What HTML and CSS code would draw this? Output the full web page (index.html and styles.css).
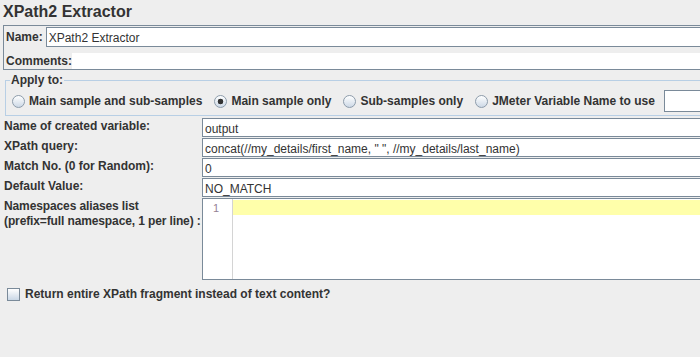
FILE: index.html
```html
<!DOCTYPE html>
<html lang="en">
<head>
  <meta charset="UTF-8" />
  <meta name="viewport" content="width=device-width, initial-scale=1.0" />
  <title>XPath2 Extractor</title>
  <link rel="stylesheet" href="styles.css">
</head>
<body>
  <div class="page">
    <!-- ===== TITLE ===== -->
    <h1 class="title">XPath2 Extractor</h1>

    <!-- ===== NAME / COMMENTS ===== -->
    <div class="name-panel">
      <div class="name-row">
        <span class="name-label">Name:</span>
        <div class="field name-field">XPath2 Extractor</div>
      </div>
      <div class="name-row comments-row">
        <span class="name-label">Comments:</span>
        <div class="plain-field"></div>
      </div>
    </div>

    <!-- ===== APPLY TO ===== -->
    <fieldset class="apply">
      <legend>Apply to:</legend>
      <div class="radios">
        <span class="opt"><span class="radio"></span>Main sample and sub-samples</span>
        <span class="opt"><span class="radio on"></span>Main sample only</span>
        <span class="opt"><span class="radio"></span>Sub-samples only</span>
        <span class="opt last"><span class="radio"></span>JMeter Variable Name to use</span>
        <div class="var-box"></div>
      </div>
    </fieldset>

    <!-- ===== FIELDS ===== -->
    <div class="form">
      <div class="lbl">Name of created variable:</div>
      <div class="field">output</div>

      <div class="lbl">XPath query:</div>
      <div class="field">concat(//my_details/first_name, " ", //my_details/last_name)</div>

      <div class="lbl">Match No. (0 for Random):</div>
      <div class="field">0</div>

      <div class="lbl">Default Value:</div>
      <div class="field">NO_MATCH</div>

      <div class="lbl lbl-two">Namespaces aliases list<br>(prefix=full namespace, 1 per line) :</div>
      <div class="editor">
        <div class="gutter"><span>1</span></div>
        <div class="editor-body"><div class="current-line"></div></div>
      </div>
    </div>

    <!-- ===== CHECKBOX ===== -->
    <div class="check-row">
      <span class="checkbox"></span>
      <span>Return entire XPath fragment instead of text content?</span>
    </div>
  </div>
</body>
</html>
```

FILE: styles.css
```css
:root {
  --bg: #eeeeee;
  --fg: #333333;
  --edge: #7a8a99;
  --group: #b8cfe5;
}
* { box-sizing: border-box; margin: 0; padding: 0; }

body {
  font-family: "Liberation Sans", Arial, sans-serif;
  font-size: 12px;
  line-height: 14px;
  background: var(--bg);
  color: var(--fg);
  overflow: hidden;
}

.page { width: 730px; }

/* ===== TITLE ===== */
.title {
  font-size: 16px;
  line-height: 18px;
  font-weight: 700;
  margin: 3px 0 4px 3px;
}

/* ===== NAME / COMMENTS ===== */
.name-panel {
  margin-left: 3px;
  border: 1px solid var(--edge);
  padding-top: 1px;
}
.name-row { display: flex; align-items: center; }
.name-label { font-weight: 700; padding: 0 3px 0 2px; }
.name-field { flex: 1; height: 20px; padding-top: 3px; }
.comments-row { margin-top: 6px; }
.comments-row .name-label { padding-right: 0; }
.plain-field { flex: 1; height: 16px; background: #ffffff; }

/* ===== APPLY TO ===== */
.apply {
  margin: 3px 0 0 5px;
  padding: 3px 0 3px 6px;
  border: 1px solid var(--group);
}
.apply legend {
  font-weight: 700;
  padding: 0 1px;
  margin-left: -2px;
}
.radios { display: flex; align-items: center; height: 22px; }
.opt {
  display: flex;
  align-items: center;
  gap: 4px;
  margin-right: 12px;
  font-weight: 700;
  white-space: nowrap;
}
.opt.last { margin-right: 9px; }
.radio {
  width: 13px;
  height: 13px;
  border-radius: 50%;
  border: 1px solid #8d9cab;
  background: linear-gradient(#ffffff, #cdd9e6);
}
.radio.on {
  background: radial-gradient(circle, #333333 0 2.6px, transparent 3.1px),
              linear-gradient(#ffffff, #cdd9e6);
}
.var-box {
  flex: 1;
  height: 22px;
  background: #ffffff;
  border: 1px solid var(--edge);
}

/* ===== FIELDS ===== */
.form {
  display: grid;
  grid-template-columns: 198px 1fr;
  row-gap: 1px;
  margin-top: 2px;
  padding-left: 4px;
}
.lbl { font-weight: 700; padding-top: 1px; white-space: nowrap; }
.lbl-two { line-height: 15px; letter-spacing: -0.12px; }
.field {
  height: 19px;
  background: #ffffff;
  border: 1px solid var(--edge);
  padding: 3px 2px 0;
  white-space: nowrap;
  overflow: hidden;
}
.name-field { height: 20px; padding-top: 3px; }

.editor {
  display: flex;
  height: 82px;
  background: #ffffff;
  border: 1px solid var(--edge);
}
.gutter {
  width: 30px;
  border-right: 1px solid #d4d4d4;
  padding: 2px 0 0 10px;
  font-size: 11px;
  color: #948294;
}
.editor-body { flex: 1; padding-top: 1px; }
.current-line { height: 15px; background: #ffffaa; }

/* ===== CHECKBOX ===== */
.check-row {
  display: flex;
  align-items: center;
  gap: 5px;
  margin-top: 7px;
  padding-left: 7px;
  font-weight: 700;
}
.checkbox {
  width: 13px;
  height: 13px;
  border: 1px solid var(--edge);
  background: linear-gradient(#ffffff, #c9d7e6);
}
```
